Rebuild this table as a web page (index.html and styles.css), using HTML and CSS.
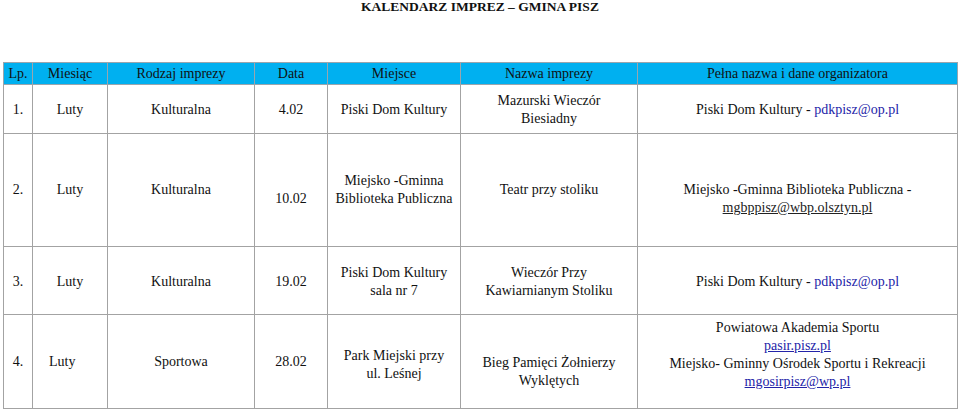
FILE: index.html
```html
<!DOCTYPE html>
<html lang="pl">
<head>
<meta charset="utf-8">
<title>Kalendarz imprez – Gmina Pisz</title>
<link rel="stylesheet" href="styles.css">
</head>
<body>
<h1 class="title">KALENDARZ IMPREZ – GMINA PISZ</h1>
<table class="cal">
  <colgroup>
    <col class="c-lp"><col class="c-mies"><col class="c-rodz"><col class="c-data"><col class="c-miejsce"><col class="c-nazwa"><col class="c-org">
  </colgroup>
  <thead>
    <tr class="r-head">
      <th>Lp.</th><th>Miesiąc</th><th>Rodzaj imprezy</th><th>Data</th><th>Miejsce</th><th>Nazwa imprezy</th><th>Pełna nazwa i dane organizatora</th>
    </tr>
  </thead>
  <tbody>
    <tr class="r1">
      <td>1.</td><td>Luty</td><td>Kulturalna</td><td>4.02</td><td>Piski Dom Kultury</td>
      <td>Mazurski Wieczór<br>Biesiadny</td>
      <td>Piski Dom Kultury - <span class="mail">pdkpisz@op.pl</span></td>
    </tr>
    <tr class="r2">
      <td>2.</td><td>Luty</td><td>Kulturalna</td><td class="low">10.02</td>
      <td>Miejsko -Gminna<br>Biblioteka Publiczna</td>
      <td>Teatr przy stoliku</td>
      <td class="low">Miejsko -Gminna Biblioteka Publiczna -<br><span class="link-dark">mgbppisz@wbp.olsztyn.pl</span></td>
    </tr>
    <tr class="r3">
      <td>3.</td><td>Luty</td><td>Kulturalna</td><td>19.02</td>
      <td>Piski Dom Kultury<br>sala nr 7</td>
      <td>Wieczór Przy<br>Kawiarnianym Stoliku</td>
      <td>Piski Dom Kultury - <span class="mail">pdkpisz@op.pl</span></td>
    </tr>
    <tr class="r4">
      <td>4.</td><td class="left">Luty</td><td>Sportowa</td><td>28.02</td>
      <td class="park">Park Miejski przy<br>ul. Leśnej</td>
      <td class="bieg">Bieg Pamięci Żołnierzy<br>Wyklętych</td>
      <td class="org4">Powiatowa Akademia Sportu<br><span class="link">pasir.pisz.pl</span><br>Miejsko- Gminny Ośrodek Sportu i Rekreacji<br><span class="link">mgosirpisz@wp.pl</span></td>
    </tr>
  </tbody>
</table>
</body>
</html>
```
FILE: styles.css
```css
html, body {
  margin: 0;
  padding: 0;
  background: #fff;
}
body {
  font-family: "Liberation Serif", "Times New Roman", serif;
  color: #111;
  width: 960px;
  height: 412px;
  overflow: hidden;
}
.title {
  margin: 0;
  height: 62px;
  font-size: 13.5px;
  line-height: 13px;
  font-weight: bold;
  text-align: center;
  color: #111;
}
.cal {
  margin-left: 3px;
  width: 954px;
  border-collapse: collapse;
  table-layout: fixed;
  font-family: "Liberation Serif", "Times New Roman", serif;
  font-size: 14px;
  line-height: 18px;
}
.c-lp { width: 29px; }
.c-mies { width: 75px; }
.c-rodz { width: 147px; }
.c-data { width: 73px; }
.c-miejsce { width: 133px; }
.c-nazwa { width: 177px; }
.c-org { width: 320px; }
.cal th, .cal td {
  border: 1px solid #a3a3a3;
  padding: 0;
  text-align: center;
  vertical-align: middle;
  font-weight: normal;
}
.r-head { height: 22px; }
.r-head th {
  background: #00b0f0;
  border-color: #9aa5ad;
}
.r1 { height: 49px; }
.r2 { height: 113px; }
.r3 { height: 68px; }
.r4 { height: 94px; }
.r1 td, .r3 td { padding-top: 2px; }
.cal td.low { padding-top: 18px; }
.cal td.left { text-align: left; padding-left: 16px; }
.cal td.park { padding-top: 6px; }
.cal td.bieg { padding-top: 20px; }
.cal td.org4 { padding-bottom: 14px; }
.mail { color: #2323a8; }
.link { color: #2323a8; text-decoration: underline; }
.link-dark { color: #222; text-decoration: underline; }
```
